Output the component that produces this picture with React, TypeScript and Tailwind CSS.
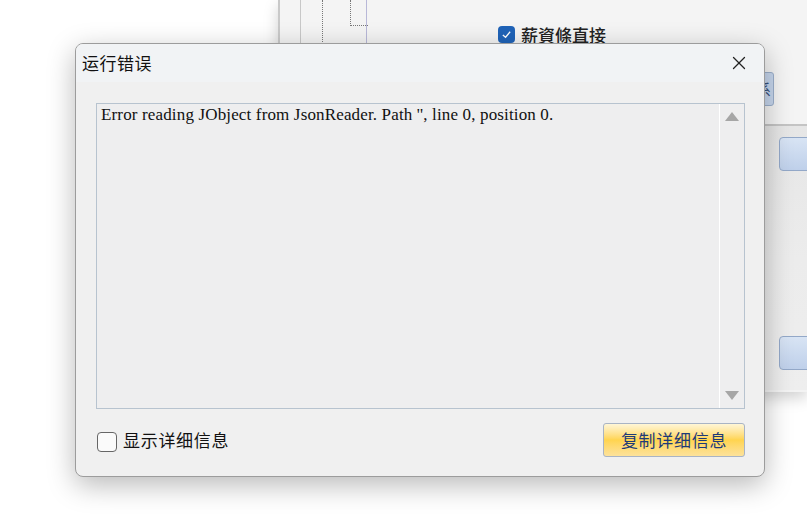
import { X } from 'lucide-react';

const cjk = "font-['Microsoft_YaHei','Noto_Sans_CJK_SC',sans-serif]";

function BackWindow() {
  return (
    <div className="absolute left-[278px] top-0 w-[529px] h-[392px] border-l-2 border-[#c9c9c9] bg-[#f3f3f3] shadow-[0_6px_14px_rgba(0,0,0,0.18)]">
      <div className="relative h-[126px] border-b-2 border-[#c4c4c4] bg-[#f4f4f4]">
        <div className="absolute left-[20px] top-0 h-[126px] border-l border-[#c8c8c8]" />
        <div className="absolute left-[42px] top-0 h-[126px] border-l border-dotted border-[#777]" />
        <div className="absolute left-[70px] top-0 w-[18px] h-[26px] border-l border-b border-dotted border-[#777]" />
        <div className="absolute left-[86px] top-0 h-[126px] border-l border-[#b8b8d8]" />
        <div className="absolute left-[218px] top-[26px] flex items-center gap-[6px]">
          <span className="w-[17px] h-[17px] rounded-[4px] bg-[#1f63b8] flex items-center justify-center">
            <svg width="11" height="11" viewBox="0 0 12 12">
              <path d="M2 6.5 L5 9 L10 3" stroke="#fff" strokeWidth="1.4" fill="none" />
            </svg>
          </span>
          <span className={`${cjk} text-[17px] font-medium text-[#222] leading-none`}>薪資條直接</span>
        </div>
        <div className="absolute left-[474px] top-[72px] w-[20px] h-[34px] rounded-[3px] border border-[#9cb0cc] bg-[#c7d7ee] flex items-center justify-end pr-[2px]">
          <span className={`${cjk} text-[15px] text-[#35507a]`}>系</span>
        </div>
      </div>
      <div className="relative h-[264px] bg-gradient-to-b from-[#e6e6e6] via-[#ececec] to-[#eeeeee]">
        <div className="absolute left-[499px] top-[11px] w-[40px] h-[34px] rounded-[4px] border border-[#93a8c8] bg-gradient-to-b from-[#d8e4f4] to-[#bfd0ea]" />
        <div className="absolute left-[499px] top-[210px] w-[40px] h-[34px] rounded-[4px] border border-[#93a8c8] bg-gradient-to-b from-[#d8e4f4] to-[#bfd0ea]" />
      </div>
    </div>
  );
}

function ErrorDialog() {
  return (
    <div className="absolute left-[75px] top-[43px] w-[690px] h-[434px] rounded-[8px] border border-[#9c9c9c] bg-[#f0f0f0] shadow-[0_8px_28px_rgba(0,0,0,0.28)] flex flex-col overflow-hidden">
      <div className="h-[38px] bg-[#f1f3f5] flex items-center justify-between pl-[6px] pr-[14px]">
        <span className={`${cjk} text-[17px] tracking-[0.5px] text-[#111]`}>运行错误</span>
        <X className="w-[22px] h-[22px] text-[#222]" strokeWidth={1.4} />
      </div>
      <div className="flex-1 flex flex-col pl-[20px] pr-[19px] pt-[21px] pb-[18px]">
        <div className="h-[306px] flex border border-[#b7c3cf] bg-[#eeeeef]">
          <div className="flex-1 pl-[4px] pt-[0px] font-['Liberation_Serif',serif] text-[17px] tracking-[0.15px] text-[#111] leading-[22px]">
            Error reading JObject from JsonReader. Path '', line 0, position 0.
          </div>
          <div className="w-[25px] border-l border-white flex flex-col items-center justify-between py-[8px]">
            <svg width="14" height="9" viewBox="0 0 14 9">
              <path d="M7 0 L14 9 L0 9 Z" fill="#a6a6a6" />
            </svg>
            <svg width="14" height="9" viewBox="0 0 14 9">
              <path d="M0 0 L14 0 L7 9 Z" fill="#a6a6a6" />
            </svg>
          </div>
        </div>
        <div className="flex-1 flex items-center justify-between pt-[12px]">
          <label className="flex items-center gap-[6px] pl-[1px]">
            <span className="w-[20px] h-[20px] mt-[5px] rounded-[4px] border-[1.5px] border-[#666] bg-[#fafafa]" />
            <span className={`${cjk} text-[17px] tracking-[0.7px] text-[#111]`}>显示详细信息</span>
          </label>
          <button className="w-[142px] h-[34px] rounded-[3px] border border-[#a9b4c4] bg-gradient-to-b from-[#fff6d6] via-[#ffd44e] to-[#fde29a] flex items-center justify-center">
            <span className={`${cjk} text-[17px] tracking-[0.7px] text-[#1e3a78] leading-none`}>复制详细信息</span>
          </button>
        </div>
      </div>
    </div>
  );
}

export default function App() {
  return (
    <div className="relative w-[807px] h-[514px] bg-white overflow-hidden">
      <BackWindow />
      <ErrorDialog />
    </div>
  );
}
